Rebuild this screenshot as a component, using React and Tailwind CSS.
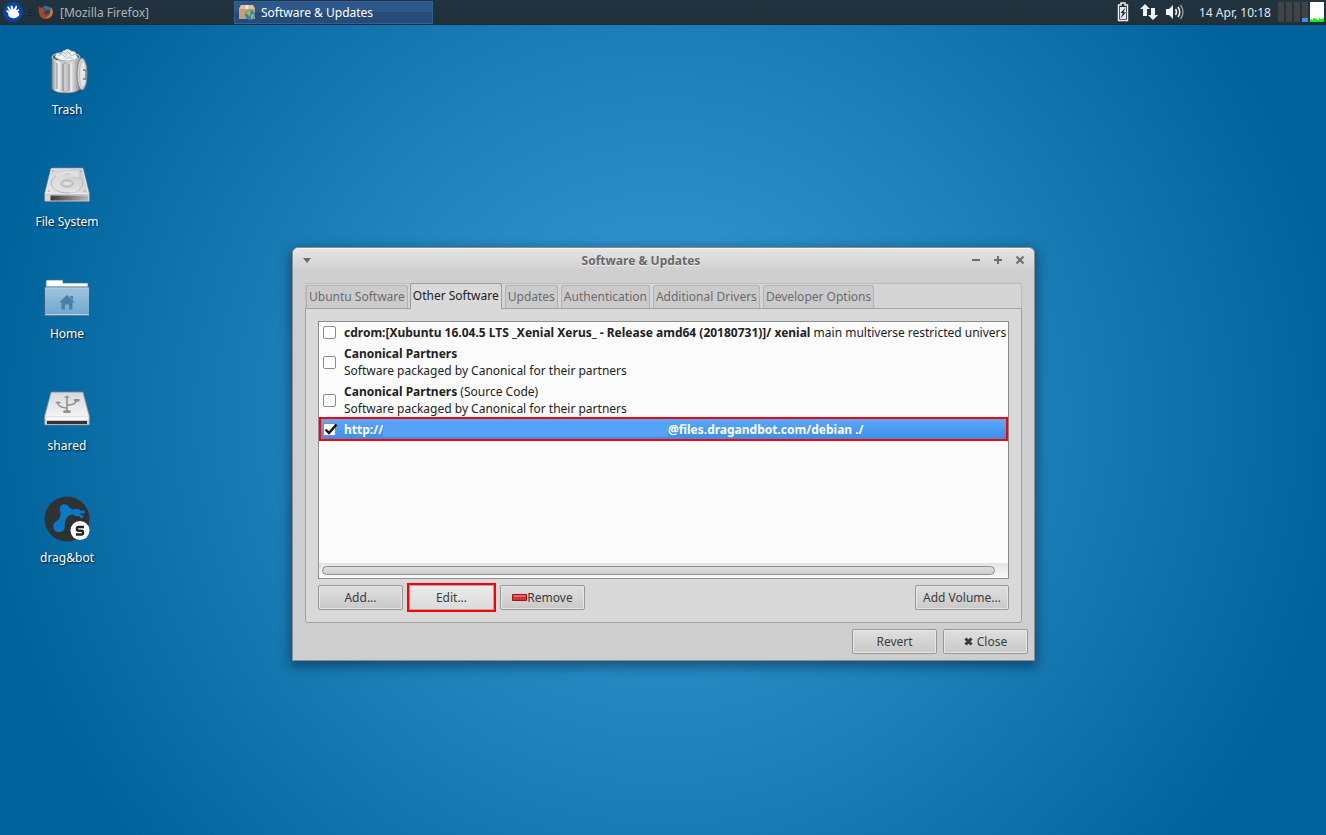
import React, { useState } from 'react';

const tabs = ['Ubuntu Software', 'Other Software', 'Updates', 'Authentication', 'Additional Drivers', 'Developer Options'];

const sources = [
  {
    id: 'cdrom',
    name: 'cdrom:[Xubuntu 16.04.5 LTS _Xenial Xerus_ - Release amd64 (20180731)]/ xenial',
    extra: 'main multiverse restricted univers',
  },
  { id: 'partners', name: 'Canonical Partners', note: 'Software packaged by Canonical for their partners' },
  {
    id: 'partners-src',
    name: 'Canonical Partners',
    extra: '(Source Code)',
    note: 'Software packaged by Canonical for their partners',
  },
];

function TrashIcon() {
  return (
    <svg viewBox="0 0 48 48" className="w-12 h-12">
      <defs>
        <linearGradient id="can" x1="0" x2="1">
          <stop offset="0" stopColor="#8f9091" />
          <stop offset=".2" stopColor="#f1f1f1" />
          <stop offset=".45" stopColor="#b4b5b6" />
          <stop offset=".7" stopColor="#e0e0e0" />
          <stop offset="1" stopColor="#8b8c8d" />
        </linearGradient>
      </defs>
      <ellipse cx="23" cy="43" rx="15" ry="3" fill="#003d63" opacity=".4" />
      <path d="M9 9v31c0 3 6 5 14 5s14-2 14-5V9z" fill="url(#can)" stroke="#7b7c7d" strokeWidth=".7" />
      <ellipse cx="23" cy="9" rx="14" ry="4.500" fill="#5c6063" stroke="#d4d4d4" />
      <path d="M12 9l2-4 4 1 2-3 5-2 3 2 4 1 1 3 2 3-4 2-6 1-8-1z" fill="#eef3f5" stroke="#b9c6cc" strokeWidth=".6" />
      <path d="M15 8l4-2 3 3 4-5 2 4 4-2M19 4l3 2 3-3M22 11l4-2 4 2" fill="none" stroke="#9fb1ba" strokeWidth=".8" />
      <path d="M14 15v26M20 16v27M26 16v27" stroke="#8d8e90" strokeWidth="1.500" opacity=".7" />
      <path d="M16 15v26M22 16v27M28 16v27" stroke="#fff" strokeWidth="1" opacity=".6" />
      <ellipse cx="39" cy="26" rx="5" ry="16" fill="#d2d3d4" stroke="#85878a" />
      <ellipse cx="40" cy="26" rx="3.500" ry="13" fill="#e6e6e7" stroke="#a8a9ab" strokeWidth=".6" />
      <path d="M40 22h3v9h-3" fill="none" stroke="#77797b" strokeWidth="1.300" />
    </svg>
  );
}

function DriveIcon() {
  return (
    <svg viewBox="0 0 48 48" className="w-12 h-12">
      <defs>
        <linearGradient id="driveFront" x1="0" x2="1">
          <stop offset="0" stopColor="#3a3a3a" />
          <stop offset="1" stopColor="#b5b5b5" />
        </linearGradient>
        <linearGradient id="driveTop" x1="0" x2="1" y1="1" y2="0">
          <stop offset="0" stopColor="#e9e9e9" />
          <stop offset="1" stopColor="#cbcbcb" />
        </linearGradient>
      </defs>
      <path d="M8 8h32l6.500 26v6.500q0 1-1 1h-43q-1 0-1-1V34z" fill="#c9c9c9" stroke="#858585" strokeWidth=".7" />
      <path d="M8.500 9h31l6 24.500h-43z" fill="url(#driveTop)" stroke="#f5f5f5" strokeWidth=".6" />
      <ellipse cx="24" cy="23" rx="16" ry="10" fill="none" stroke="#b4b4b4" />
      <path d="M26 11c4-2 9-1 11 0v6c-2 3-5-1-8 1" fill="#dedede" stroke="#b4b4b4" strokeWidth=".7" />
      <path d="M13 16c4-3 9-3 14-4M36 28c-2 3-6 4-9 4" fill="none" stroke="#fafafa" />
      <ellipse cx="24" cy="23.500" rx="6" ry="3.500" fill="#d4d4d4" stroke="#a6a6a6" />
      <ellipse cx="24" cy="23.500" rx="3.500" ry="2" fill="#e3e3e3" stroke="#bcbcbc" strokeWidth=".5" />
      <circle cx="10" cy="11" r=".8" fill="#999" />
      <circle cx="38" cy="11" r=".8" fill="#999" />
      <circle cx="6" cy="31" r=".8" fill="#999" />
      <circle cx="42" cy="31" r=".8" fill="#999" />
      <path d="M2.500 35h43v5.500h-43z" fill="#d7d7d7" />
      <path d="M7.500 35.500h37.500v5h-37.500z" fill="url(#driveFront)" />
    </svg>
  );
}

function HomeIcon() {
  return (
    <svg viewBox="0 -6 48 48" className="w-12 h-12">
      <defs>
        <linearGradient id="folder" x1="0" x2="0" y1="0" y2="1">
          <stop offset="0" stopColor="#9ec4de" />
          <stop offset="1" stopColor="#6ea6cf" />
        </linearGradient>
      </defs>
      <path d="M4 2h15q1 0 1 1v2h24q1 0 1 1v12H3V3q0-1 1-1z" fill="#fff" stroke="#40728f" strokeWidth=".7" />
      <path d="M2.500 9h43q1 0 1 1v27q0 1-1 1h-43q-1 0-1-1V10q0-1 1-1z" fill="url(#folder)" stroke="#365f80" />
      <path d="M2.500 10h43M2.500 36.500h43" stroke="#c4dced" strokeWidth=".8" />
      <path d="M24 17l8 7.500h-2.500v7h-3.500v-5h-4v5h-3.500v-7H16z" fill="#4680a8" />
      <path d="M27 18h3v4l-3-3z" fill="#4680a8" />
    </svg>
  );
}

function SharedIcon() {
  return (
    <svg viewBox="0 0 48 48" className="w-12 h-12">
      <defs>
        <linearGradient id="usbTop" x1="0" x2="0" y1="0" y2="1">
          <stop offset="0" stopColor="#d9d9d9" />
          <stop offset="1" stopColor="#f4f4f4" />
        </linearGradient>
      </defs>
      <path d="M8 8h32l6.500 24v8q0 1-1 1h-43q-1 0-1-1v-8z" fill="#cfcfcf" stroke="#838383" strokeWidth=".7" />
      <path d="M8.500 9h31l6 23.500h-43z" fill="url(#usbTop)" />
      <path d="M2.500 33h43v3h-43z" fill="#f7f7f7" />
      <path d="M4 37h40v3H4z" fill="#2f3132" />
      <path d="M24 13v14M24 24c-5 0-9-2-9-5M24 21c5 0 9-1 9-4" fill="none" stroke="#8f8f8f" strokeWidth="1.600" />
      <path d="M20.500 13.500l3.500-2 3.500 2zM12 18.500q3-2 6 0-3 2-6 0zM31 15h5.500v2.500H31z" fill="#8f8f8f" />
      <ellipse cx="24" cy="27.500" rx="4" ry="1.500" fill="#8f8f8f" />
    </svg>
  );
}

function DragBotIcon() {
  return (
    <svg viewBox="0 0 48 48" className="w-12 h-12">
      <circle cx="24" cy="23" r="22.500" fill="#2f3133" />
      <g fill="#0a78c2">
        <circle cx="21.500" cy="13" r="4.800" />
        <circle cx="16" cy="30.500" r="5.800" />
        <circle cx="34" cy="16.500" r="3.800" />
        <circle cx="40" cy="16" r="1.800" />
        <circle cx="38.500" cy="20.500" r="1.800" />
        <path d="M17 13.500c.6 3 .8 6-.4 8.500-1.500 3-5.600 4-6.200 8l11.400 1c-.8-4 .7-8.500 3.600-11 2.600-2.200 5.500-2 8-.2l1-6.500c-3.400.6-6.500.4-8.500-2z" />
      </g>
      <path d="M34 16l6 0M34 17l4.500 3.500" stroke="#0a78c2" strokeWidth="2" />
      <circle cx="37" cy="34.500" r="9.500" fill="#fff" />
      <path d="M41 31h-5.500q-1.500 0-1.500 1.500v.8q0 1.500 1.500 1.500h3q1.500 0 1.500 1.500v.7q0 1.500-1.500 1.500H33" fill="none" stroke="#222" strokeWidth="2.400" />
    </svg>
  );
}

const shortcuts = [
  { label: 'Trash', Icon: TrashIcon },
  { label: 'File System', Icon: DriveIcon },
  { label: 'Home', Icon: HomeIcon },
  { label: 'shared', Icon: SharedIcon },
  { label: 'drag&bot', Icon: DragBotIcon },
];

function TopPanel() {
  return (
    <header className="flex h-[25px] items-center justify-between bg-linear-to-b from-[#22343f] to-[#1f303b] border-b border-[#1b2a34]">
      <div className="flex h-full items-center">
        <button aria-label="Applications menu" className="ml-[3px] w-5 h-5">
          <svg viewBox="0 0 20 20" className="w-5 h-5">
            <circle cx="10" cy="10" r="10" fill="#0545ab" />
            <path
              d="M3.300 9.500c-.4-1.300 1-1.700 2-1L6.600 9.400 4.400 5.800c-.4-1.200.8-1.700 1.600-.8L8.200 8 7.700 4.600c0-1.300 1.500-1.500 1.900-.3l1 3.300 1.900-3.400c.8-1 2-.3 1.600.9L13 8.300l2-.9c1.200-.3 1.600 1 .6 1.700l-1 .7c1.400.8 2 2 1.600 3.300-.7 2-3.200 3.100-6 3.100-3.200 0-5-1.900-5-4.200 0-1-.9-1.600-1.900-2.500z"
              fill="#fff"
            />
          </svg>
        </button>
        <span className="ml-[5px] flex w-1 flex-col gap-0.5">
          <span className="h-px bg-[#14212a]" />
          <span className="h-px bg-[#14212a]" />
          <span className="h-px bg-[#14212a]" />
        </span>
        <button className="ml-1.5 flex w-[196px] items-center gap-1.5 text-[#aeb5b9]">
          <svg viewBox="0 0 16 16" className="w-4 h-4">
            <circle cx="8" cy="8" r="6.500" fill="#263f6b" />
            <path d="M6 2.500c2-1 5 0 6 2l-2 2-3-1z" fill="#3c6f9d" />
            <path d="M1 2.500l2 1.500c1-1 2-1 3-1L5.500 5 8 6.500 6 8c0 2 1.500 3 3.500 2.500S12 8 11.500 5.500L13 4c2.500 3 2.300 7-.5 9.500-3 2.500-7.500 2-10-.8C.5 10 .3 5.500 1 2.500z" fill="#a0482c" />
            <path d="M12.500 3c2.500 2 3 6 1 8.500C12 13.500 9 14.500 7 13c3 0 5.500-2 5.500-5z" fill="#b98a3d" />
          </svg>
          [Mozilla Firefox]
        </button>
        <button className="flex h-[23px] w-[199px] items-center gap-1.5 border border-[#2f5f96] bg-linear-to-b from-[#2e588c] from-50% to-[#264b79] to-50% px-1 text-white">
          <svg viewBox="0 0 16 16" className="w-4 h-4">
            <path d="M2 1h12l2 4v10H0V5z" fill="#c69f70" />
            <path d="M2 1h12l2 4H0z" fill="#ddc09a" />
            <path d="M6.500 1h3v4h-3z" fill="#f2e4cf" />
            <circle cx="11" cy="11" r="5" fill="#3d7fb9" />
            <path d="M7 9c1-2 3-3 5-2l-1 2 1 1-2 2-1-1zM12 11l3-1c0 3-1 5-3 5z" fill="#8ec447" />
          </svg>
          Software &amp; Updates
        </button>
      </div>

      <div className="flex h-full items-center pr-[2px] text-[#e3e6e8]">
        <svg viewBox="0 0 12 20" className="w-3 h-5">
          <path d="M4 1h4v2h2.500v15.500h-9V3H4z" fill="none" stroke="#f2f2f2" strokeWidth="1.400" />
          <path d="M3 5h6v12H3z" fill="#e8e8e8" />
          <path d="M8.500 5.500L3.500 11h2.300L3.500 16.500 9 10.200H6.500z" fill="#1d2c36" />
        </svg>
        <svg viewBox="0 0 18 18" className="ml-[11px] w-[18px] h-[18px]">
          <path d="M5 1l5 5H7v7H3V6H0zM13 17l-5-5h3V5h4v7h3z" fill="#f2f2f2" />
        </svg>
        <svg viewBox="0 0 20 18" className="ml-[7px] w-5 h-[18px]" fill="none">
          <path d="M1 6h3l4-4v14l-4-4H1z" fill="#f2f2f2" />
          <path d="M10.500 6q2 3 0 6" stroke="#f2f2f2" strokeWidth="1.500" />
          <path d="M13 4q3.500 5 0 10" stroke="#f2f2f2" strokeWidth="1.500" />
          <path d="M15.500 2q5 7 0 14" stroke="#8b959b" strokeWidth="1.500" />
        </svg>
        <time className="ml-3.5 w-[79px]">14 Apr, 10:18</time>
        <div className="flex gap-0.5">
          <span className="h-5 w-1.5 bg-[#434343]" />
          <span className="h-5 w-1.5 bg-[#434343]" />
          <span className="h-5 w-1.5 bg-[#434343]" />
          <span className="flex h-5 w-1.5 items-end bg-[#434343]">
            <span className="h-1 w-full bg-[#3c8ef0]" />
          </span>
        </div>
        <svg viewBox="0 0 14 20" className="ml-0.5 w-3.5 h-5">
          <path d="M0 0h14v20H0z" fill="#fff" />
          <path d="M0 20v-2h1v-1h1v1h1v-2h2v1h2v1h2v-2h1v1h2v-1h1v1h1v3z" fill="#0f0" />
        </svg>
      </div>
    </header>
  );
}

function Button({ children, className = 'w-[85px]' }) {
  return (
    <button
      className={`flex h-[25px] items-center justify-center rounded-[2px] border border-[#989898] bg-linear-to-b from-[#dfdfdf] to-[#c9c9c9] text-[#3c3c3c] inset-shadow-[0_0_0_1px_#e6e6e6] ${className}`}
    >
      {children}
    </button>
  );
}

function CheckBox({ id, checked, onChange }) {
  return (
    <span className="relative h-[13px] w-[13px] shrink-0">
      <input
        id={id}
        type="checkbox"
        checked={checked}
        onChange={onChange}
        className="block h-[13px] w-[13px] appearance-none rounded-[2px] border border-[#8c8c8c] bg-white"
      />
      {checked && (
        <svg viewBox="0 0 14 13" className="pointer-events-none absolute left-px top-0 h-[13px] w-3.5">
          <path d="M1.500 6.500L5 10 12.500 1.500" fill="none" stroke="#111" strokeWidth="2.400" />
        </svg>
      )}
    </span>
  );
}

function SoftwareWindow() {
  const [active, setActive] = useState('Other Software');
  const [enabled, setEnabled] = useState({ dragandbot: true });
  const toggle = id => setEnabled({ ...enabled, [id]: !enabled[id] });

  return (
    <section className="absolute left-[292px] top-[222px] w-[743px] rounded-t-md border border-[#8d8d8d] bg-[#cecece] shadow-[0_4px_12px_2px_rgba(0,20,40,0.45)]">
      <div className="flex h-6 items-center rounded-t-md bg-linear-to-b from-[#e6e6e6] to-[#cecece] pl-2.5 pr-[9px] inset-shadow-[0_1px_0_#f4f4f4]">
        <button aria-label="Window menu">
          <svg viewBox="0 0 8 5" className="w-2 h-[5px]">
            <path d="M0 0h8L4 5z" fill="#6a6a6a" />
          </svg>
        </button>
        <h1 className="flex-1 text-center font-bold text-[#696969] [text-shadow:0_1px_0_#f2f2f2]">Software &amp; Updates</h1>
        <div className="flex gap-3">
          <button aria-label="Minimize">
            <svg viewBox="0 0 10 10" className="w-2.5 h-2.5">
              <path d="M1 5h8" stroke="#6d6d6d" strokeWidth="2" />
            </svg>
          </button>
          <button aria-label="Maximize">
            <svg viewBox="0 0 10 10" className="w-2.5 h-2.5">
              <path d="M1 5h8M5 1v8" stroke="#6d6d6d" strokeWidth="2" />
            </svg>
          </button>
          <button aria-label="Close window">
            <svg viewBox="0 0 10 10" className="w-2.5 h-2.5">
              <path d="M1.500 1.500l7 7M8.500 1.500l-7 7" stroke="#6d6d6d" strokeWidth="2" />
            </svg>
          </button>
        </div>
      </div>

      <div className="px-3 pt-[11px]">
        {/* Tab strip */}
        <div role="tablist" className="flex h-[25px] items-end gap-[3px] rounded-t-[3px] border border-b-0 border-[#bdbdbd] bg-[#d5d5d5]">
          {tabs.map(tab => (
            <button
              key={tab}
              role="tab"
              aria-selected={tab === active}
              onClick={() => setActive(tab)}
              className={
                tab === active
                  ? 'relative -mb-px -mt-px -ml-px h-[26px] rounded-t-[3px] border border-b-0 border-[#9d9d9d] bg-[#d9d9d9] px-0.5 pb-0.5 text-[#222]'
                  : 'h-[23px] rounded-t-[3px] border border-b-0 border-[#b3b3b3] bg-[#cbcbcb] px-0.5 pb-0.5 text-[#6b6b6b]'
              }
            >
              {tab}
            </button>
          ))}
        </div>

        <div className="rounded-b-[3px] border border-[#a1a1a1] bg-[#d9d9d9] px-3 pb-3 pt-3">
          <div className="flex h-[258px] flex-col overflow-hidden border border-[#8e8e8e] bg-[#fcfcfc] text-[#222]">
            {sources.map(s => (
              <div key={s.id} className="flex shrink-0 items-center gap-2 whitespace-nowrap px-1 py-0.5">
                <CheckBox id={s.id} checked={!!enabled[s.id]} onChange={() => toggle(s.id)} />
                <label htmlFor={s.id}>
                  <b>{s.name}</b> {s.extra}
                  {s.note && <span className="block">{s.note}</span>}
                </label>
              </div>
            ))}
            <div className="-mt-0.5 flex h-6 shrink-0 items-center gap-2 border-2 border-[#f00] bg-linear-to-b from-[#5ba9fa] to-[#3d8ee6] px-0.5 font-bold text-white">
              <CheckBox id="dragandbot" checked={enabled.dragandbot} onChange={() => toggle('dragandbot')} />
              <label htmlFor="dragandbot" className="flex">
                <span className="flex w-[324px]">
                  http://
                  <span className="h-4 flex-1 bg-[#56a2f6]" />
                </span>
                <span>@files.dragandbot.com/debian ./</span>
              </label>
            </div>
            <div className="mt-auto h-[15px] bg-linear-to-b from-[#e3e3e3] to-[#fafafa] pl-[3px] pr-[13px] pt-[3px]">
              <div className="h-[9px] rounded-full border border-[#8f8f8f] bg-linear-to-b from-[#dedede] to-[#cfcfcf]" />
            </div>
          </div>

          <div className="mt-1.5 flex items-center">
            <Button>Add...</Button>
            <button className="-my-0.5 ml-1 h-[29px] w-[89px] border-2 border-[#f00] bg-linear-to-b from-[#ececec] to-[#dadada] text-[#3c3c3c] inset-shadow-[0_0_0_1px_#aaa]">
              Edit...
            </button>
            <Button className="ml-1 w-[85px]">
              <svg viewBox="0 0 15 7" className="w-[15px] h-[7px]">
                <path d="M.5.500h14v6H.500z" fill="#d9303a" stroke="#9b1420" />
                <path d="M1.500 2h12" stroke="#f29497" />
              </svg>
              Remove
            </Button>
            <Button className="ml-auto w-[94px]">Add Volume...</Button>
          </div>
        </div>
      </div>

      <div className="flex justify-end gap-1.5 px-1.5 py-1.5">
        <Button>Revert</Button>
        <Button>
          <svg viewBox="0 0 9 9" className="mr-1 w-[9px] h-[9px]">
            <path d="M1.500 1.500l6 6M7.500 1.500l-6 6" stroke="#3c3c3c" strokeWidth="3" />
          </svg>
          Close
        </Button>
      </div>
    </section>
  );
}

export default function App() {
  return (
    <div className="flex min-h-screen flex-col bg-[radial-gradient(circle_farthest-corner_at_50%_50%,#3c9dd8_0%,#1d80b9_46%,#00629b_88%)] font-['Noto_Sans',sans-serif] text-[12px] leading-[17px]">
      <TopPanel />
      <main className="relative flex-1 overflow-hidden pl-[11px] pt-[23px]">
        <div className="flex w-28 flex-col gap-[42px]">
          {shortcuts.map(({ label, Icon }) => (
            <a key={label} href="#" className="flex h-[70px] flex-col items-center gap-[5px] text-white [text-shadow:1px_1px_2px_#001828]">
              <Icon />
              {label}
            </a>
          ))}
        </div>
        <SoftwareWindow />
      </main>
    </div>
  );
}
